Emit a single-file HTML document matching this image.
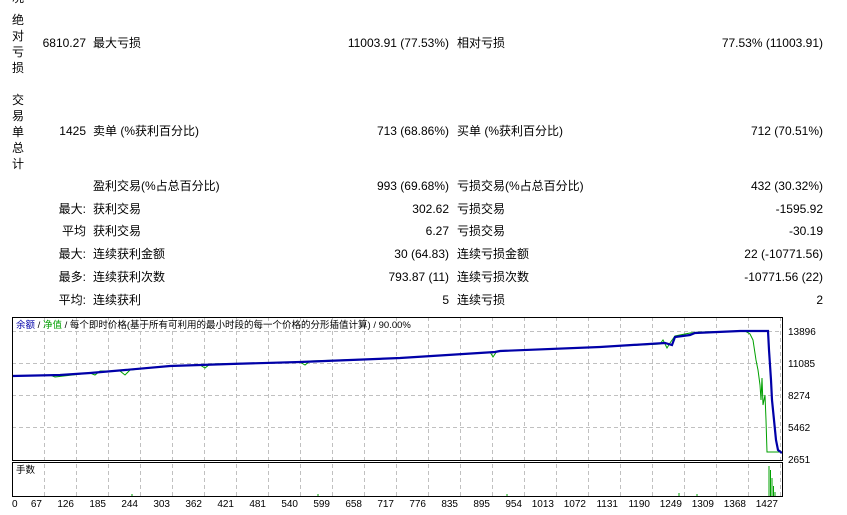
<!DOCTYPE html>
<html><head><meta charset="utf-8"><style>
body{margin:0;width:847px;height:515px;background:#fff;overflow:hidden;position:relative;font-family:"Liberation Sans","Noto Sans CJK SC",sans-serif;font-size:12px;color:#000}
.t{position:absolute;white-space:nowrap;line-height:14px}
.r{text-align:right}
.v{position:absolute;left:11px;width:14px;font-size:12px;line-height:16px;text-align:center}
.ax{position:absolute;font-size:10px;white-space:nowrap;line-height:12px}
</style></head><body>
<div class="v" style="top:-10px">况</div>
<div class="v" style="top:12px">绝<br>对<br>亏<br>损</div>
<div class="v" style="top:92px">交<br>易<br>单<br>总<br>计</div>

<div class="t r" style="right:761px;top:36px">6810.27</div>
<div class="t" style="left:93px;top:36px">最大亏损</div>
<div class="t r" style="right:398px;top:36px">11003.91 (77.53%)</div>
<div class="t" style="left:457px;top:36px">相对亏损</div>
<div class="t r" style="right:24px;top:36px">77.53% (11003.91)</div>

<div class="t r" style="right:761px;top:124px">1425</div>
<div class="t" style="left:93px;top:124px">卖单 (%获利百分比)</div>
<div class="t r" style="right:398px;top:124px">713 (68.86%)</div>
<div class="t" style="left:457px;top:124px">买单 (%获利百分比)</div>
<div class="t r" style="right:24px;top:124px">712 (70.51%)</div>

<div class="t" style="left:93px;top:179px">盈利交易(%占总百分比)</div>
<div class="t r" style="right:398px;top:179px">993 (69.68%)</div>
<div class="t" style="left:457px;top:179px">亏损交易(%占总百分比)</div>
<div class="t r" style="right:24px;top:179px">432 (30.32%)</div>

<div class="t r" style="right:761px;top:202px">最大:</div>
<div class="t" style="left:93px;top:202px">获利交易</div>
<div class="t r" style="right:398px;top:202px">302.62</div>
<div class="t" style="left:457px;top:202px">亏损交易</div>
<div class="t r" style="right:24px;top:202px">-1595.92</div>

<div class="t r" style="right:761px;top:224px">平均</div>
<div class="t" style="left:93px;top:224px">获利交易</div>
<div class="t r" style="right:398px;top:224px">6.27</div>
<div class="t" style="left:457px;top:224px">亏损交易</div>
<div class="t r" style="right:24px;top:224px">-30.19</div>

<div class="t r" style="right:761px;top:247px">最大:</div>
<div class="t" style="left:93px;top:247px">连续获利金额</div>
<div class="t r" style="right:398px;top:247px">30 (64.83)</div>
<div class="t" style="left:457px;top:247px">连续亏损金额</div>
<div class="t r" style="right:24px;top:247px">22 (-10771.56)</div>

<div class="t r" style="right:761px;top:270px">最多:</div>
<div class="t" style="left:93px;top:270px">连续获利次数</div>
<div class="t r" style="right:398px;top:270px">793.87 (11)</div>
<div class="t" style="left:457px;top:270px">连续亏损次数</div>
<div class="t r" style="right:24px;top:270px">-10771.56 (22)</div>

<div class="t r" style="right:761px;top:293px">平均:</div>
<div class="t" style="left:93px;top:293px">连续获利</div>
<div class="t r" style="right:398px;top:293px">5</div>
<div class="t" style="left:457px;top:293px">连续亏损</div>
<div class="t r" style="right:24px;top:293px">2</div>

<svg style="position:absolute;left:0;top:0" width="847" height="515">
<g stroke="#c0c0c0" stroke-dasharray="4,3" stroke-width="1">
<line x1="12" y1="331.5" x2="783" y2="331.5"/><line x1="12" y1="363.5" x2="783" y2="363.5"/>
<line x1="12" y1="395.5" x2="783" y2="395.5"/><line x1="12" y1="427.5" x2="783" y2="427.5"/>
<path d="M44.5 317V496M76.5 317V496M108.5 317V496M140.5 317V496M172.5 317V496M204.5 317V496M236.5 317V496M268.5 317V496M300.5 317V496M332.5 317V496M364.5 317V496M396.5 317V496M428.5 317V496M460.5 317V496M492.5 317V496M524.5 317V496M556.5 317V496M588.5 317V496M620.5 317V496M652.5 317V496M684.5 317V496M716.5 317V496M748.5 317V496M780.5 317V496"/>
</g>
<polyline fill="none" stroke="#00a000" stroke-width="1" points="12,376 50,375 55,377 90,373 95,375 100,371 120,371 125,375 130,370 170,366 200,365 205,368 210,364 300,362 305,365 310,361 400,358 490,352 493,357 497,351 600,347 660,344 663,340 667,348 670,343 675,336 690,333 700,332 745,331 750,334 753,340 756,360 758,370 760,385 761,400 762,378 763,405 765,395 766,420 767,452 780,452"/>
<polyline fill="none" stroke="#0000a8" stroke-width="2.2" points="12,376 60,375 90,373 125,370 170,366 230,364 300,362 400,358 495,352 500,351 600,347 665,343 672,345 675,337 690,335 695,333 740,331 768,331 769,350 771,380 772,400 774,420 776,440 778,450 782,453"/>
<rect x="12.5" y="317.5" width="770" height="143" fill="none" stroke="#000"/>
<rect x="12.5" y="462.5" width="770" height="34" fill="none" stroke="#000"/>
<g stroke="#00a000"><line x1="769" y1="466" x2="769" y2="496"/><line x1="770.5" y1="470" x2="770.5" y2="496"/><line x1="772" y1="478" x2="772" y2="496"/><line x1="773.5" y1="486" x2="773.5" y2="496"/><line x1="775" y1="492" x2="775" y2="496"/><line x1="132" y1="494" x2="132" y2="496"/><line x1="318" y1="494" x2="318" y2="496"/><line x1="507" y1="494" x2="507" y2="496"/><line x1="679" y1="493" x2="679" y2="496"/><line x1="697" y1="494" x2="697" y2="496"/></g>
</svg>
<div class="ax" style="left:16px;top:320px;font-size:9.5px"><span style="color:#0000a8">余额</span> / <span style="color:#00a000">净值</span> / 每个即时价格(基于所有可利用的最小时段的每一个价格的分形插值计算) / 90.00%</div>
<div class="ax" style="left:16px;top:465px;font-size:9.5px">手数</div>
<div class="ax" style="left:788px;top:327px">13896</div>
<div class="ax" style="left:788px;top:359px">11085</div>
<div class="ax" style="left:788px;top:391px">8274</div>
<div class="ax" style="left:788px;top:423px">5462</div>
<div class="ax" style="left:788px;top:455px">2651</div>
<div style="position:absolute;top:499px;left:0;font-size:10px;line-height:12px">
<span class="ax" style="left:12px">0</span>
<span class="ax" style="right:-42px">67</span>
<span class="ax" style="right:-74px">126</span>
<span class="ax" style="right:-106px">185</span>
<span class="ax" style="right:-138px">244</span>
<span class="ax" style="right:-170px">303</span>
<span class="ax" style="right:-202px">362</span>
<span class="ax" style="right:-234px">421</span>
<span class="ax" style="right:-266px">481</span>
<span class="ax" style="right:-298px">540</span>
<span class="ax" style="right:-330px">599</span>
<span class="ax" style="right:-362px">658</span>
<span class="ax" style="right:-394px">717</span>
<span class="ax" style="right:-426px">776</span>
<span class="ax" style="right:-458px">835</span>
<span class="ax" style="right:-490px">895</span>
<span class="ax" style="right:-522px">954</span>
<span class="ax" style="right:-554px">1013</span>
<span class="ax" style="right:-586px">1072</span>
<span class="ax" style="right:-618px">1131</span>
<span class="ax" style="right:-650px">1190</span>
<span class="ax" style="right:-682px">1249</span>
<span class="ax" style="right:-714px">1309</span>
<span class="ax" style="right:-746px">1368</span>
<span class="ax" style="right:-778px">1427</span>
</div>
</body></html>
